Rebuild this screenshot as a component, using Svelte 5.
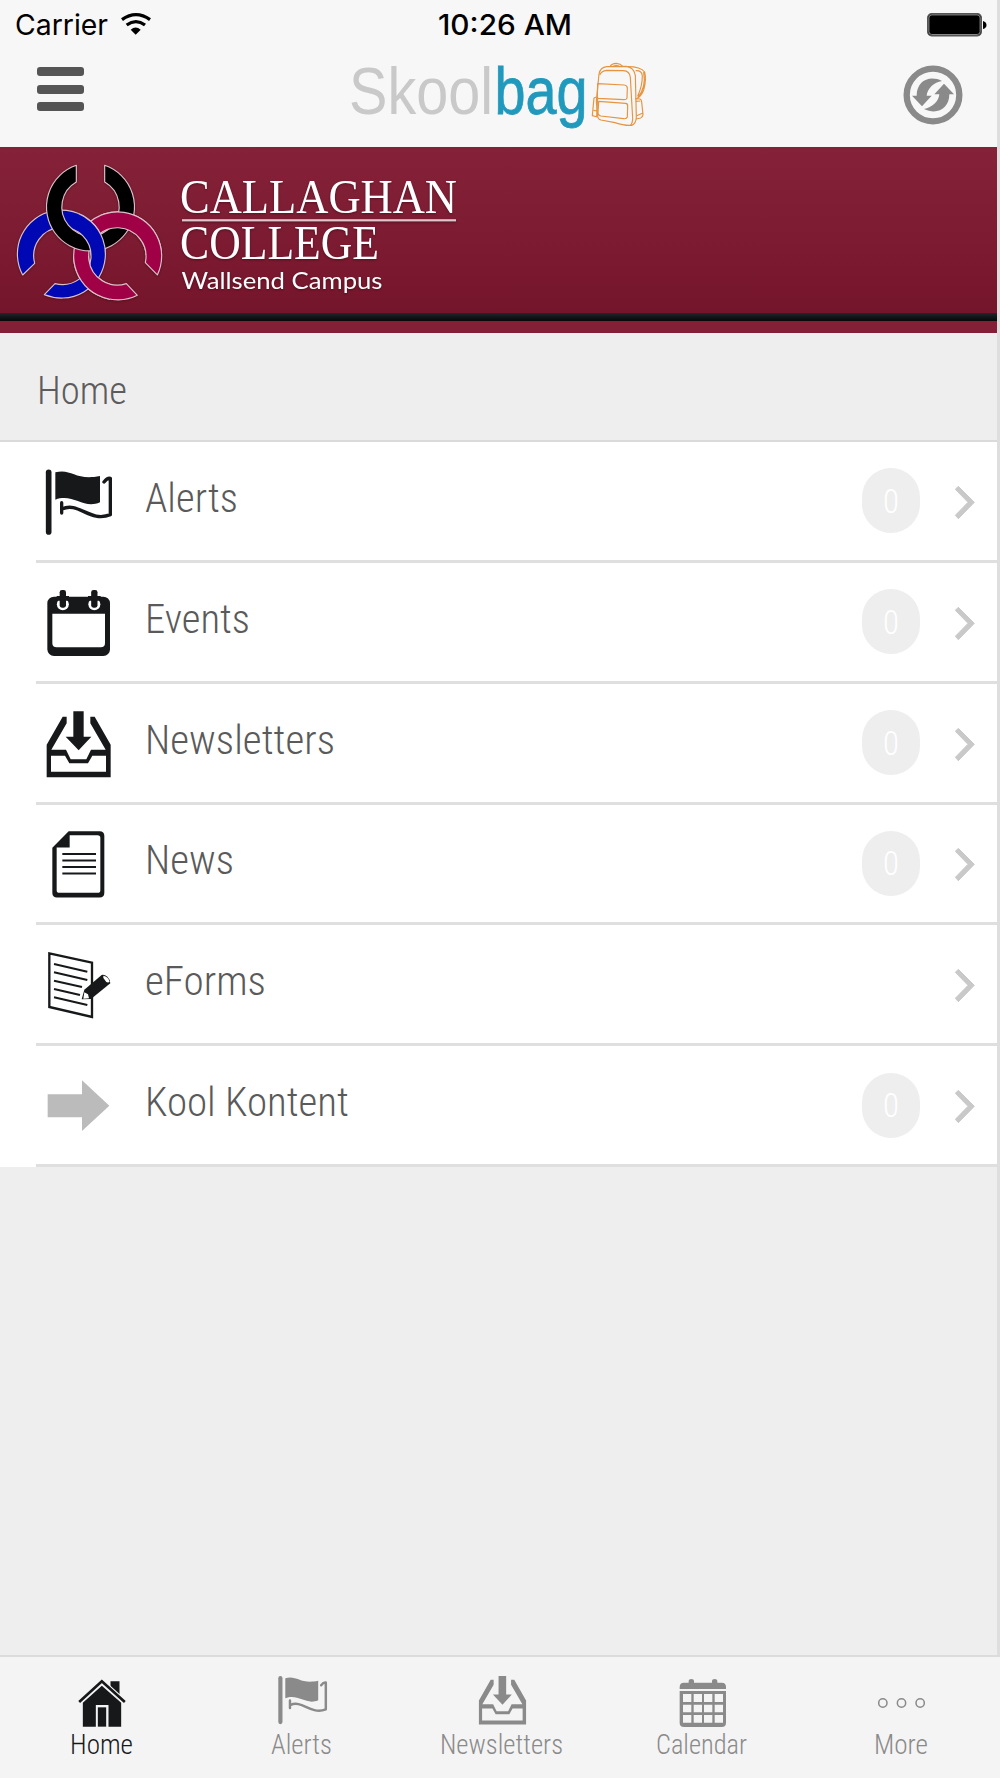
<script>
  const rows = [
    { icon: 'flag', name: 'Alerts', width: 93, count: '0' },
    { icon: 'events', name: 'Events', width: 105, count: '0' },
    { icon: 'inbox', name: 'Newsletters', width: 190, count: '0' },
    { icon: 'news', name: 'News', width: 89, count: '0' },
    { icon: 'form', name: 'eForms', width: 121, count: null },
    { icon: 'arrow', name: 'Kool Kontent', width: 204, count: '0' }
  ];

  const tabs = [
    { icon: 'home', name: 'Home', width: 63, active: true },
    { icon: 'flag', name: 'Alerts', width: 61 },
    { icon: 'inbox', name: 'Newsletters', width: 123 },
    { icon: 'calendar', name: 'Calendar', width: 91 },
    { icon: 'more', name: 'More', width: 54 }
  ];

  const views = {
    flag: '120 373 228 228',
    events: '120 735 228 228',
    inbox: '30 77 228 228',
    news: '30 439.5 228 228',
    form: '30 82 228 228',
    arrow: '30 446 228 228',
    home: '220.5 96 168 168',
    calendar: '762 96 168 168',
    more: '160.5 96 168 168'
  };
</script>

{#snippet label(text, width, size, height, baseline)}
  <svg class="label" {width} {height}>
    <text x="0" y={baseline} font-size={size} textLength={width} lengthAdjust="spacingAndGlyphs">{text}</text>
  </svg>
{/snippet}

{#snippet glyph(name)}
  <svg class="glyph" viewBox={views[name]}>
    {#if name === 'flag'}
      <path d="M146 398V577" fill="none" stroke="currentColor" stroke-width="17" stroke-linecap="round" />
      <path d="M166 398C215 385 225 424 300 409V488C250 510 220 460 166 480Z" fill="currentColor" />
      <path d="M185 489V520M186 508C235 484 270 550 331 525V416Q322 414 312 427" fill="none" stroke="currentColor" stroke-width="10" stroke-linecap="round" stroke-linejoin="round" />
    {:else if name === 'events'}
      <rect x="142" y="770" width="188" height="178" rx="20" fill="currentColor" />
      <path d="M157 821H315V909Q315 922 302 922H170Q157 922 157 909Z" fill="#fff" />
      <circle cx="188.500" cy="793" r="18" fill="#fff" />
      <circle cx="283" cy="793" r="18" fill="#fff" />
      <path d="M170 768H207V782H170ZM264 768H302V782H264Z" fill="currentColor" />
      <rect x="179" y="750" width="19" height="53" rx="7" fill="currentColor" />
      <rect x="273.500" y="750" width="19" height="53" rx="7" fill="currentColor" />
    {:else if name === 'inbox'}
      <path d="M130 93H161V169H184L146 210L107 169H130Z" fill="currentColor" />
      <path fill-rule="evenodd" d="M98 109H110V129L64 208H108L122 237H169L183 208H227L181 129V109H194L242 193V291H50V193ZM63 226V274H228V226H187L174 249H118L105 226Z" fill="currentColor" />
    {:else if name === 'news'}
      <path fill-rule="evenodd" d="M116 455H209Q223 455 223 469V640Q223 654 209 654H81Q67 654 67 640V505ZM119 467V504H80V632Q80 640 88 640H203Q211 640 211 632V475Q211 467 203 467Z" fill="currentColor" />
      <path d="M97 523.500H198M97 543H198M97 562.500H198M97 582H198" stroke="currentColor" stroke-width="6" />
    {:else if name === 'form'}
      <path d="M58 101L186 129V292L58 262Z" fill="#fff" stroke="currentColor" stroke-width="7" />
      <path d="M72 133L172 156M72 158L172 181M72 183L156 202M72 208L150 226M72 233L172 256" stroke="currentColor" stroke-width="6" />
      <path d="M163 210L215 166Q222 163 232 171Q242 181 241 191L183 238L155 239Z" fill="currentColor" />
      <path d="M220 168Q235 170 239 187Q230 192 224 180Q218 174 220 168ZM163 218L174 224L177 236L160 237Z" fill="#fff" />
    {:else if name === 'arrow'}
      <path d="M53 525H156V483L238 559L156 635V594H53Z" fill="#bbb" />
    {:else if name === 'home'}
      <path d="M330 155V124H357V180Z" fill="currentColor" />
      <path d="M247 188L304 137L362 188V260H324V195H286V260H247Z" fill="currentColor" />
      <path d="M236 186L304 124L373 186" fill="none" stroke="#f4f4f4" stroke-width="15" />
      <path d="M236 186L304 124L373 186" fill="none" stroke="currentColor" stroke-width="8" />
      <rect x="292" y="202" width="25" height="58" fill="currentColor" />
    {:else if name === 'calendar'}
      <path d="M779 147V141Q779 128 792 128H806V122Q806 117 814 117T822 122V128H876V122Q876 117 884 117T892 122V128H905Q918 128 918 141V147Z" fill="currentColor" />
      <path d="M779 153H918V248Q918 261 905 261H792Q779 261 779 248Z" fill="currentColor" />
      <path d="M789 162h25v24h-25zM821 162h25v24h-25zM852 162h25v24h-25zM884 162h25v24h-25zM789 194h25v23h-25zM821 194h25v23h-25zM852 194h25v23h-25zM884 194h25v23h-25zM789 225h25v23h-25zM821 225h25v23h-25zM852 225h25v23h-25zM884 225h25v23h-25z" fill="#f4f4f4" />
    {:else}
      <g fill="none" stroke="currentColor" stroke-width="4.500">
        <circle cx="187" cy="189" r="12.500" /><circle cx="243" cy="189" r="12.500" /><circle cx="299" cy="189" r="12.500" />
      </g>
    {/if}
  </svg>
{/snippet}

<div class="app">
  <div class="screen">
    <header>
      <div class="status">
        <div class="carrier">
          <svg width="93" height="46"><text y="35" font-size="28" textLength="93" lengthAdjust="spacingAndGlyphs">Carrier</text></svg>
          <svg width="30" height="46" viewBox="363 0 90 138">
            <path d="M366 59Q408 29 450 59M380 75Q408 55 435 75" fill="none" stroke="#000" stroke-width="10" />
            <path d="M392 89Q407 76 422 89L407 104Z" />
          </svg>
        </div>
        <svg class="time" width="134" height="46"><text y="35" font-size="28" textLength="134" lengthAdjust="spacingAndGlyphs">10:26 AM</text></svg>
        <svg class="battery" width="60" height="46">
          <rect x="0.700" y="13.700" width="53.600" height="22" rx="4" fill="#000" stroke="#555" stroke-width="1.400" />
          <rect x="1.900" y="14.900" width="51.200" height="19.600" rx="3" fill="none" stroke="#aaa" stroke-width="0.800" />
          <path d="M56 21Q59.500 22 59.500 25T56 29Z" />
        </svg>
      </div>
      <nav>
        <button class="menu" aria-label="Menu"><i></i><i></i><i></i></button>
        <svg class="brand" width="310" height="86" viewBox="345 50 310 86">
          <text class="skool" x="349" y="113.500" textLength="144" lengthAdjust="spacingAndGlyphs">Skool</text>
          <text class="bag" x="494.500" y="113.500" textLength="93" lengthAdjust="spacingAndGlyphs">bag</text>
          <g transform="translate(330 0) scale(0.33333)" fill="none" stroke="#e79440" stroke-width="3.500" stroke-linejoin="round">
            <path d="M804 252L807 222Q811 202 830 200L889 199Q912 202 916 226L919 352Q918 372 905 376Q885 378 855 368L813 360Q803 357 803 347L799 305Z" />
            <path d="M809 225Q815 212 830 211L880 212Q899 213 901 232L908 355Q908 370 901 376" />
            <path d="M840 200Q845 190 859 190Q872 191 878 199M848 200Q858 193 870 200" />
            <path d="M803 251L883 255Q892 256 892 265L891 294Q890 299 882 299L802 295Z" />
            <path d="M806 304L887 310Q894 311 893 318L892 351Q890 357 881 356L812 348Q805 346 804 340Z" />
            <path d="M799 291L792 294L787 347L802 351M791 331L801 333M803 291L800 352" />
            <path d="M893 200Q932 200 944 216Q950 240 941 270Q934 289 919 297M917 212Q936 211 937 228Q937 259 923 288M923 292Q949 265 941 216" />
            <path d="M915 296L930 297Q935 299 935 306L939 344Q938 352 932 354L918 357M917 304L931 303M920 347L937 340" />
          </g>
        </svg>
        <svg class="refresh" width="60" height="60" viewBox="309 194 180 180">
          <circle cx="399" cy="284" r="79" fill="none" stroke="#8a8a8a" stroke-width="19" />
          <g fill="#8a8a8a">
            <path id="turn" d="M336 286H350C350 243 387 223 426 242C402 246 382 264 380 286H395L366 318Z" />
            <use href="#turn" transform="rotate(180 399 284)" />
          </g>
        </svg>
      </nav>
    </header>

    <section class="banner">
      <svg width="480" height="166" viewBox="0 147 480 166">
        <defs>
          <path id="ring-black" d="M229 75A132 132 0 1 0 314 75V125A86 86 0 1 1 229 125Z" />
          <path id="ring-blue" d="M68 404A132 132 0 1 1 133 463L165 430A86 86 0 1 0 104 369Z" />
          <path id="ring-red" d="M472 404A132 132 0 1 0 412 465L379 430A86 86 0 1 1 436 367Z" />
          <clipPath id="right"><rect x="300" y="190" width="200" height="155" /></clipPath>
          <clipPath id="middle"><rect x="235" y="190" width="100" height="156" /></clipPath>
          <clipPath id="lower"><rect x="210" y="345" width="120" height="150" /></clipPath>
        </defs>
        <g class="emblem" transform="translate(0 140.300) scale(0.33333)" stroke="#dcc0c8" stroke-width="3.500" stroke-linejoin="round">
          <use href="#ring-red" fill="#a00046" />
          <use href="#ring-blue" fill="#0008b4" />
          <use href="#ring-black" fill="#000" />
          <g clip-path="url(#right)"><use href="#ring-red" fill="#a00046" /></g>
          <g clip-path="url(#middle)"><use href="#ring-blue" fill="#0008b4" /></g>
          <g clip-path="url(#lower)"><use href="#ring-red" fill="#a00046" /></g>
        </g>
        <g class="college">
          <text x="180" y="212.500" font-size="48" textLength="277" lengthAdjust="spacingAndGlyphs">CALLAGHAN</text>
          <rect x="182" y="219.200" width="274" height="2.200" fill="#dfc6cd" />
          <text x="180" y="259.300" font-size="48" textLength="199" lengthAdjust="spacingAndGlyphs">COLLEGE</text>
          <text class="campus" x="181.500" y="288.700" font-size="23.500" textLength="201" lengthAdjust="spacingAndGlyphs">Wallsend Campus</text>
        </g>
      </svg>
      <div class="stripe"></div>
    </section>

    <h1>{@render label('Home', 90, 38.5, 48, 38)}</h1>

    <ul>
      {#each rows as row}
        <li>
          {@render glyph(row.icon)}
          <div class="name">{@render label(row.name, row.width, 40, 56, 44)}</div>
          {#if row.count !== null}<span class="badge">{@render label(row.count, 16, 34, 40, 32)}</span>{/if}
          <svg class="chevron" width="20" height="33" viewBox="345 198 60 99"><path d="M355 199L346 208L384 247L346 286L355 296L403 247Z" fill="#c9c9c9" stroke="#c9c9c9" stroke-width="3" /></svg>
        </li>
      {/each}
    </ul>
  </div>

  <footer>
    {#each tabs as tab}
      <div class="tab" class:active={tab.active}>
        {@render glyph(tab.icon)}
        {@render label(tab.name, tab.width, 27, 36, 26)}
      </div>
    {/each}
  </footer>
</div>

<style>
  :global(body) { background: #eee; }
  .app { width: 1000px; height: 1778px; display: flex; flex-direction: column; font-family: "Roboto Condensed", Roboto, sans-serif; overflow: hidden; }
  svg { display: block; flex: none; }
  .screen { flex: 1; background: #eee; border-right: 3px solid #dedede; }
  header { height: 147px; background: #f7f7f7; font-family: Inter, sans-serif; }
  .status { height: 46px; display: grid; grid-template-columns: 438px 1fr 60px; padding: 0 10px 0 0; }
  .carrier { display: flex; gap: 13px; padding-left: 15px; }
  .time { font-weight: 550; }
  nav { height: 101px; display: grid; grid-template-columns: 308px 310px 1fr; padding: 0 34px 0 37px; }
  .menu { width: 47px; height: 44px; margin-top: 21px; padding: 0; border: 0; background: none; display: flex; flex-direction: column; justify-content: space-between; }
  .menu i { width: 47px; height: 9px; border-radius: 3px; background: #555; }
  .brand { margin-top: 4px; font-family: "Liberation Sans Narrow", "Liberation Sans", sans-serif; font-size: 66px; }
  .skool { fill: #c9c9c9; }
  .bag { fill: #2199bd; stroke: #2199bd; stroke-width: 0.8px; }
  .refresh { justify-self: end; margin-top: 18.500px; }
  .banner { height: 186px; background: linear-gradient(#852239 0, #75152b 166px, #832038 166px); }
  .stripe { height: 8px; background: linear-gradient(#20262a, #060809); }
  .emblem { filter: drop-shadow(0 2px 3px #0005); }
  .college { fill: #fff; font-family: "Liberation Serif", serif; filter: drop-shadow(0 1px 1px #0005); }
  .campus { font-family: Lato, sans-serif; }
  .label { font-weight: 300; font-stretch: 75%; fill: currentColor; overflow: visible; }
  h1 { height: 109px; margin: 0; padding: 33px 0 0 37px; box-sizing: border-box; border-bottom: 2px solid #dadada; color: #5c5c5c; }
  ul { height: 725px; margin: 0; padding: 0 0 0 36px; box-sizing: border-box; list-style: none; background: #fff; display: grid; grid-template-rows: repeat(6, 1fr); }
  li { border-bottom: 3px solid #dfdfdf; display: flex; align-items: center; padding: 0 22px 0 4px; color: #5a5a5a; }
  li > .glyph { width: 76px; height: 76px; color: #16181a; margin-top: 2px; }
  .name { flex: 1; padding-left: 29px; margin-top: -10px; }
  .badge { width: 58px; height: 65px; border-radius: 29px; background: #eee; color: #fff; display: flex; align-items: center; justify-content: center; }
  .chevron { margin-left: 35px; margin-top: 3px; }
  footer { height: 123px; box-sizing: border-box; border-top: 2px solid #dcdcdc; background: #f4f4f4; display: grid; grid-template-columns: repeat(5, 1fr); }
  .tab { display: flex; flex-direction: column; align-items: center; padding-top: 15px; color: #8a8a8a; }
  .tab > .glyph { width: 56px; height: 56px; margin-left: 3px; }
  .tab > .label { margin-left: 2px; }
  .active { color: #16181a; }
</style>
